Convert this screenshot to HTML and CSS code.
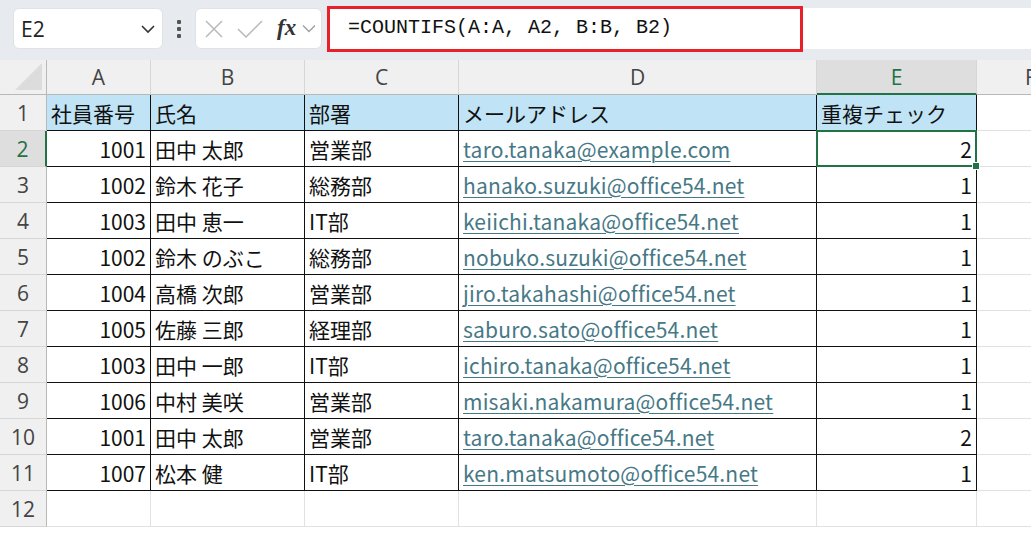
FILE: index.html
```html
<!DOCTYPE html>
<html lang="ja">
<head>
<meta charset="utf-8">
<link rel="stylesheet" href="styles.css">
</head>
<body>
<div class="toolbar">
  <div class="namebox">
    <span class="nb-text">E2</span>
    <svg class="chev" width="16" height="10" viewBox="0 0 16 10"><path d="M2 2 L8 8 L14 2" fill="none" stroke="#333" stroke-width="1.6"/></svg>
  </div>
  <div class="dots"><span></span><span></span><span></span></div>
  <div class="fxbox">
    <svg class="ic-x" width="20" height="20" viewBox="0 0 20 20"><path d="M2 2 L18 18 M18 2 L2 18" stroke="#b8b8b8" stroke-width="1.5"/></svg>
    <svg class="ic-check" width="26" height="20" viewBox="0 0 26 20"><path d="M1 10 L9 18 L25 2" fill="none" stroke="#b8b8b8" stroke-width="1.5"/></svg>
    <span class="fx">fx</span>
    <svg class="chev2" width="14" height="9" viewBox="0 0 14 9"><path d="M1 1.5 L7 7.5 L13 1.5" fill="none" stroke="#a0a0a0" stroke-width="1.4"/></svg>
  </div>
  <div class="formula">
    <div class="formula-mark">=COUNTIFS(A:A, A2, B:B, B2)</div>
  </div>
</div>
<div class="sheet">
<table class="grid">
  <colgroup>
    <col class="c-rh"><col class="c-a"><col class="c-b"><col class="c-c"><col class="c-d"><col class="c-e"><col class="c-f">
  </colgroup>
  <thead>
    <tr class="colhead">
      <th class="corner"><div class="tri"></div></th>
      <th>A</th><th>B</th><th>C</th><th>D</th><th class="sel">E</th><th class="fcol">F</th>
    </tr>
  </thead>
  <tbody>
    <tr class="hdr"><th class="rh">1</th><td class="d">社員番号</td><td class="d">氏名</td><td class="d">部署</td><td class="d">メールアドレス</td><td class="d">重複チェック</td><td class="e"></td></tr>
    <tr><th class="rh rsel">2</th><td class="d n">1001</td><td class="d">田中 太郎</td><td class="d">営業部</td><td class="d"><span class="link">taro.tanaka@example.com</span></td><td class="d n active">2<div class="selbox"><div class="handle"></div></div></td><td class="e"></td></tr>
    <tr><th class="rh">3</th><td class="d n">1002</td><td class="d">鈴木 花子</td><td class="d">総務部</td><td class="d"><span class="link">hanako.suzuki@office54.net</span></td><td class="d n">1</td><td class="e"></td></tr>
    <tr><th class="rh">4</th><td class="d n">1003</td><td class="d">田中 恵一</td><td class="d">IT部</td><td class="d"><span class="link">keiichi.tanaka@office54.net</span></td><td class="d n">1</td><td class="e"></td></tr>
    <tr><th class="rh">5</th><td class="d n">1002</td><td class="d">鈴木 のぶこ</td><td class="d">総務部</td><td class="d"><span class="link">nobuko.suzuki@office54.net</span></td><td class="d n">1</td><td class="e"></td></tr>
    <tr><th class="rh">6</th><td class="d n">1004</td><td class="d">高橋 次郎</td><td class="d">営業部</td><td class="d"><span class="link">jiro.takahashi@office54.net</span></td><td class="d n">1</td><td class="e"></td></tr>
    <tr><th class="rh">7</th><td class="d n">1005</td><td class="d">佐藤 三郎</td><td class="d">経理部</td><td class="d"><span class="link">saburo.sato@office54.net</span></td><td class="d n">1</td><td class="e"></td></tr>
    <tr><th class="rh">8</th><td class="d n">1003</td><td class="d">田中 一郎</td><td class="d">IT部</td><td class="d"><span class="link">ichiro.tanaka@office54.net</span></td><td class="d n">1</td><td class="e"></td></tr>
    <tr><th class="rh">9</th><td class="d n">1006</td><td class="d">中村 美咲</td><td class="d">営業部</td><td class="d"><span class="link">misaki.nakamura@office54.net</span></td><td class="d n">1</td><td class="e"></td></tr>
    <tr><th class="rh">10</th><td class="d n">1001</td><td class="d">田中 太郎</td><td class="d">営業部</td><td class="d"><span class="link">taro.tanaka@office54.net</span></td><td class="d n">2</td><td class="e"></td></tr>
    <tr><th class="rh">11</th><td class="d n">1007</td><td class="d">松本 健</td><td class="d">IT部</td><td class="d"><span class="link">ken.matsumoto@office54.net</span></td><td class="d n">1</td><td class="e"></td></tr>
    <tr><th class="rh">12</th><td class="e"></td><td class="e"></td><td class="e"></td><td class="e"></td><td class="e"></td><td class="e"></td></tr>
  </tbody>
</table>
</div>
</body>
</html>
```
FILE: styles.css
```css
* { box-sizing: border-box; }
html, body { margin: 0; padding: 0; }
body {
  width: 1031px;
  height: 533px;
  overflow: hidden;
  background: #ffffff;
  font-family: "Noto Sans CJK JP", "Noto Sans", sans-serif;
  color: #111;
}
.toolbar {
  height: 60px;
  background: #e7eaee;
  display: flex;
  align-items: flex-start;
  padding-top: 8px;
  padding-left: 13px;
}
.namebox {
  width: 150px;
  height: 41px;
  background: #fff;
  border-radius: 6px;
  border: 1px solid #dfe2e6;
  display: flex;
  align-items: center;
  justify-content: space-between;
  padding: 0 6px 0 7px;
}
.nb-text {
  font-family: "Open Sans", "Liberation Sans", sans-serif;
  font-size: 21px;
  color: #222;
}
.dots {
  width: 32px;
  height: 41px;
  display: flex;
  flex-direction: column;
  align-items: center;
  justify-content: center;
  gap: 3px;
}
.dots span {
  width: 4px;
  height: 4px;
  background: #555;
  border-radius: 1px;
}
.fxbox {
  width: 127px;
  height: 41px;
  background: #fff;
  border-radius: 6px;
  border: 1px solid #dfe2e6;
  display: flex;
  align-items: center;
  padding-left: 8px;
}
.ic-x { margin-right: 13px; }
.ic-check { margin-right: 14px; }
.fx {
  font-family: "Liberation Serif", serif;
  font-style: italic;
  font-weight: bold;
  font-size: 23px;
  color: #333;
  margin-right: 6px;
  margin-top: -2px;
}
.formula {
  flex: 1;
  height: 41px;
  margin-left: 5px;
  background: #fff;
  position: relative;
}
.formula-mark {
  position: absolute;
  left: 0;
  top: -2px;
  width: 476px;
  height: 46px;
  border: 3px solid #e8202a;
  font-family: "Liberation Mono", monospace;
  font-size: 20px;
  color: #111;
  padding-left: 18px;
  line-height: 38px;
}
.sheet {
  width: 1031px;
  overflow: hidden;
}
.grid {
  border-collapse: separate;
  border-spacing: 0;
  table-layout: fixed;
  width: 1090px;
}
.c-rh { width: 47px; }
.c-a { width: 104px; }
.c-b { width: 154px; }
.c-c { width: 154px; }
.c-d { width: 358px; }
.c-e { width: 160px; }
.c-f { width: 113px; }
.colhead th {
  height: 35px;
  background: #f0f0f0;
  border-right: 1px solid #d6d6d6;
  border-bottom: 1px solid #b8b8b8;
  font-family: "Open Sans", "Liberation Sans", sans-serif;
  font-weight: normal;
  font-size: 21px;
  color: #444;
  padding: 0;
  text-align: center;
}
.colhead th.fcol {
  text-align: left;
  padding-left: 48px;
}
.colhead th.corner {
  position: relative;
  border-right: 1px solid #b8b8b8;
}
.tri {
  position: absolute;
  right: 4px;
  bottom: 4px;
  width: 0;
  height: 0;
  border-left: 27px solid transparent;
  border-bottom: 27px solid #dcdcdc;
}
.colhead th.sel {
  background: #dedede;
  color: #217346;
  border-bottom: 2px solid #217346;
}
th.rh {
  height: 36px;
  background: #f0f0f0;
  border-right: 1px solid #b8b8b8;
  border-bottom: 1px solid #d6d6d6;
  font-family: "Open Sans", "Liberation Sans", sans-serif;
  font-weight: normal;
  font-size: 21px;
  color: #444;
  padding: 0;
  text-align: center;
}
th.rh.rsel {
  background: #dedede;
  color: #217346;
  border-right: 2px solid #217346;
}
td {
  height: 36px;
  padding: 0 4px;
  font-size: 21px;
  white-space: nowrap;
  overflow: visible;
  color: #111;
}
td.d {
  border-right: 1px solid #111;
  border-bottom: 1px solid #111;
}
td.e {
  border-right: 1px solid #e1e1e1;
  border-bottom: 1px solid #e1e1e1;
}
tr.hdr td.d { background: #c0e4f5; }
td.n { text-align: right; }
.link {
  color: #467886;
  text-decoration: underline;
  text-underline-offset: 3px;
  text-decoration-thickness: 1px;
  letter-spacing: 0.2px;
}
td.active { position: relative; }
.selbox {
  position: absolute;
  left: -1px;
  top: -1px;
  right: -1px;
  bottom: -1px;
  border: 2px solid #217346;
  pointer-events: none;
}
.handle {
  position: absolute;
  right: -5px;
  bottom: -5px;
  width: 8px;
  height: 8px;
  background: #217346;
  border: 1px solid #fff;
}
```
